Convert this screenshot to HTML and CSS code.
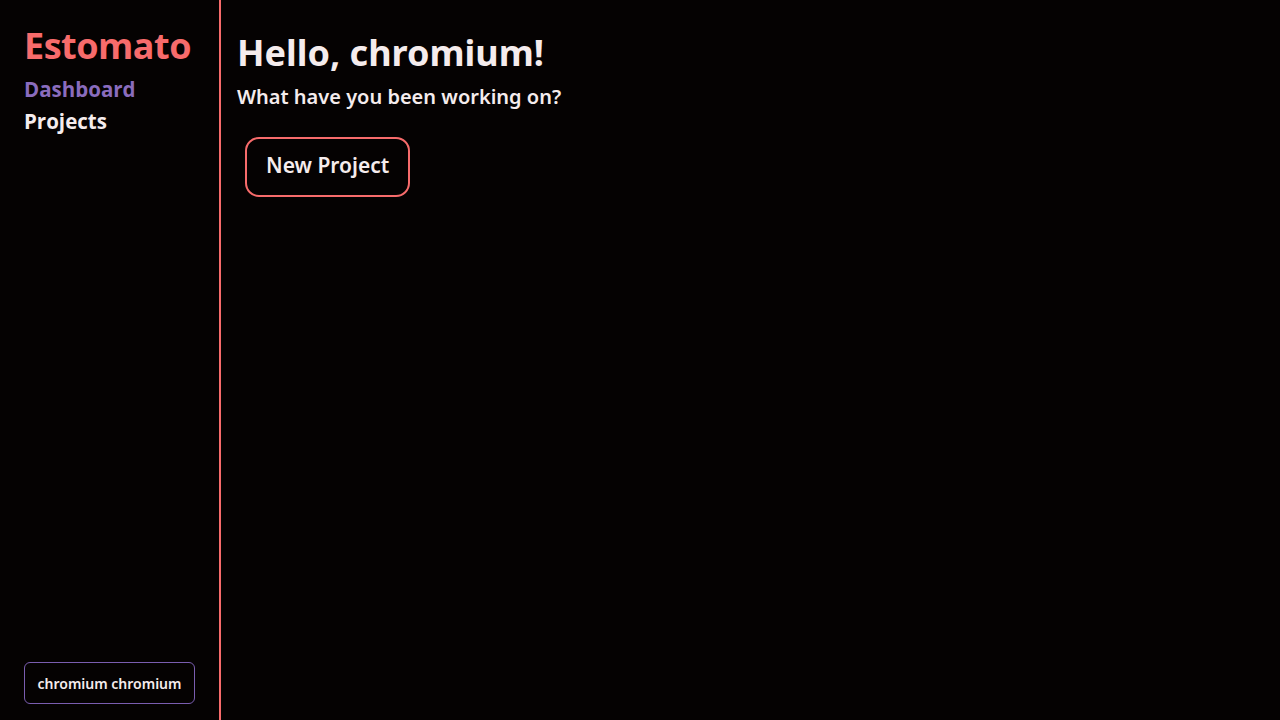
FILE: index.html
```html
<!DOCTYPE html>
<html lang="en">
<head>
<meta charset="utf-8">
<title>Estomato</title>
<link rel="stylesheet" href="styles.css">
</head>
<body>
<div class="app">
  <aside class="sidebar">
    <div class="brand">Estomato</div>
    <nav class="nav">
      <a class="nav-link active" href="#">Dashboard</a>
      <a class="nav-link" href="#">Projects</a>
    </nav>
    <div class="spacer"></div>
    <button class="user">chromium chromium</button>
  </aside>
  <main class="main">
    <h1 class="title">Hello, chromium!</h1>
    <h2 class="subtitle">What have you been working on?</h2>
    <div class="actions">
      <button class="new-project">New Project</button>
    </div>
  </main>
</div>
</body>
</html>
```
FILE: styles.css
```css
* { box-sizing: border-box; }
html, body { margin: 0; height: 100%; }
body {
  background: #050202;
  color: #f5eced;
  font-family: "Noto Sans", "Open Sans", sans-serif;
}
.app {
  display: flex;
  height: 720px;
}
.sidebar {
  width: 221px;
  flex: none;
  border-right: 2px solid #f76b6b;
  display: flex;
  flex-direction: column;
  padding: 22px 24px 16px 24px;
}
.brand {
  font-family: "Open Sans", sans-serif;
  font-weight: 700;
  font-size: 36px;
  line-height: 48px;
  color: #f76b6b;
  letter-spacing: -0.5px;
}
.nav {
  display: flex;
  flex-direction: column;
  margin-top: 3px;
}
.nav-link {
  font-family: "Open Sans", sans-serif;
  font-weight: 700;
  font-size: 20.5px;
  line-height: 32px;
  color: #f5eced;
  text-decoration: none;
}
.nav-link.active { color: #8a6cbd; }
.spacer { flex: 1; }
.user {
  align-self: flex-start;
  width: 171px;
  white-space: nowrap;
  background: transparent;
  border: 1px solid #7a5db0;
  border-radius: 6px;
  color: #f5eced;
  font-family: "Noto Sans", sans-serif;
  font-weight: 600;
  font-size: 14px;
  height: 42px;
  padding: 0;
}
.main {
  flex: 1;
  padding: 26px 16px;
}
.title {
  margin: 0;
  font-family: "Noto Sans", sans-serif;
  font-weight: 700;
  font-size: 36px;
  line-height: 54px;
}
.subtitle {
  margin: 0;
  font-family: "Noto Sans", sans-serif;
  font-weight: 600;
  font-size: 20px;
  line-height: 34px;
}
.actions {
  padding: 23px 8px;
}
.new-project {
  background: transparent;
  border: 2px solid #f76b6b;
  border-radius: 14px;
  color: #f5eced;
  font-family: "Noto Sans", sans-serif;
  font-weight: 600;
  font-size: 21px;
  height: 60px;
  padding: 0 19px 5px;
}
```
